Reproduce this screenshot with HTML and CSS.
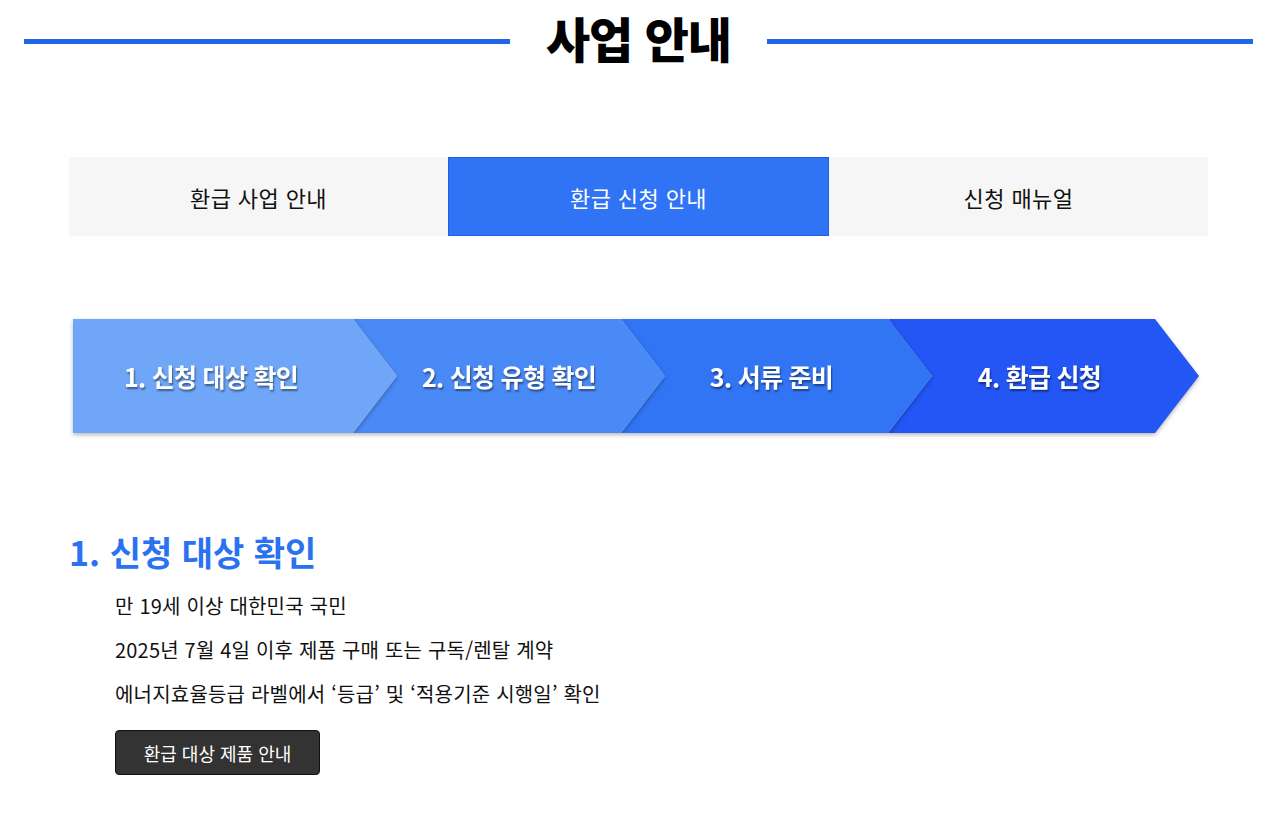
FILE: index.html
```html
<!DOCTYPE html>
<html lang="ko">
<head>
  <meta charset="UTF-8" />
  <title>사업 안내</title>
  <link rel="stylesheet" href="styles.css">
</head>
<body>
  <!-- Page title with lines on both sides -->
  <header class="page-title">
    <span class="title-line"></span>
    <h1>사업 안내</h1>
    <span class="title-line"></span>
  </header>

  <main class="content">
    <nav class="tabs">
      <a class="tab" href="#">환급 사업 안내</a>
      <a class="tab active" href="#">환급 신청 안내</a>
      <a class="tab" href="#">신청 매뉴얼</a>
    </nav>

    <!-- Step arrows -->
    <div class="steps">
      <div class="step-wrap first"><div class="step step-1">1. 신청 대상 확인</div></div>
      <div class="step-wrap"><div class="step step-2">2. 신청 유형 확인</div></div>
      <div class="step-wrap"><div class="step step-3">3. 서류 준비</div></div>
      <div class="step-wrap"><div class="step step-4">4. 환급 신청</div></div>
    </div>

    <section class="section">
      <h2>1. 신청 대상 확인</h2>
      <ul class="info-list">
        <li>만 19세 이상 대한민국 국민</li>
        <li>2025년 7월 4일 이후 제품 구매 또는 구독/렌탈 계약</li>
        <li>에너지효율등급 라벨에서 ‘등급’ 및 ‘적용기준 시행일’ 확인</li>
      </ul>
      <button class="dark-btn">환급 대상 제품 안내</button>
    </section>
  </main>
</body>
</html>
```

FILE: styles.css
```css
body {
  margin: 0;
  font-family: "Noto Sans CJK KR", "Noto Sans", sans-serif;
  color: #111;
  background: #fff;
}
.page-title {
  display: flex;
  align-items: center;
  gap: 36px;
  padding: 6px 27px 0 24px;
  height: 62px;
}
.title-line {
  flex: 1;
  height: 5px;
  margin-top: 8px;
  background: #1f66ea;
}
.page-title h1 {
  margin: 0;
  font-size: 48px;
  font-weight: 900;
  letter-spacing: -1px;
  line-height: 62px;
  color: #000;
}
.content {
  padding-left: 69px;
}
.tabs {
  display: flex;
  width: 1139px;
  margin-top: 89px;
}
.tab {
  flex: 1;
  height: 79px;
  display: flex;
  align-items: center;
  justify-content: center;
  background: #f6f6f6;
  color: #111;
  font-size: 22px;
  letter-spacing: 0.4px;
  text-decoration: none;
  box-sizing: border-box;
}
.tab.active {
  background: #3074f5;
  border: 1px solid #1c60e6;
  color: #fff;
}
.steps {
  display: flex;
  margin-top: 83px;
  margin-left: 4px;
  height: 114px;
}
.step-wrap {
  margin-left: -44px;
  filter: drop-shadow(0 2px 2px rgba(0, 0, 0, 0.28));
}
.step-wrap.first {
  margin-left: 0;
  width: 324px;
}
.step-wrap:nth-child(1) { z-index: 4; }
.step-wrap:nth-child(2) { z-index: 3; width: 312px; }
.step-wrap:nth-child(3) { z-index: 2; width: 311px; }
.step-wrap:nth-child(4) { z-index: 1; width: 311px; }
.step {
  height: 114px;
  display: flex;
  align-items: center;
  justify-content: center;
  color: #fff;
  font-size: 25px;
  font-weight: 700;
  letter-spacing: -0.7px;
  text-shadow: 1px 2px 2px rgba(0, 0, 0, 0.45);
  clip-path: polygon(0 0, calc(100% - 44px) 0, 100% 50%, calc(100% - 44px) 100%, 0 100%, 44px 50%);
}
.step-1 {
  background: #6fa6f7;
  padding-right: 48px;
  clip-path: polygon(0 0, calc(100% - 44px) 0, 100% 50%, calc(100% - 44px) 100%, 0 100%);
}
.step-2 { background: #4a8af6; }
.step-3 { background: #3175f4; padding-right: 10px; }
.step-4 { background: #2356f5; padding-right: 8px; }
.section {
  margin-top: 96px;
}
.section h2 {
  margin: 0 0 9px 0;
  font-size: 34px;
  font-weight: 700;
  line-height: 46px;
  color: #2a72f0;
}
.info-list {
  list-style: none;
  margin: 0;
  padding-left: 46px;
}
.info-list li {
  font-size: 20px;
  letter-spacing: 0.2px;
  line-height: 44px;
  color: #111;
}
.dark-btn {
  margin: 14px 0 0 46px;
  width: 205px;
  height: 45px;
  background: #333;
  border: 1px solid #111;
  border-radius: 4px;
  color: #fff;
  font-family: inherit;
  font-size: 18px;
  cursor: pointer;
}
```
